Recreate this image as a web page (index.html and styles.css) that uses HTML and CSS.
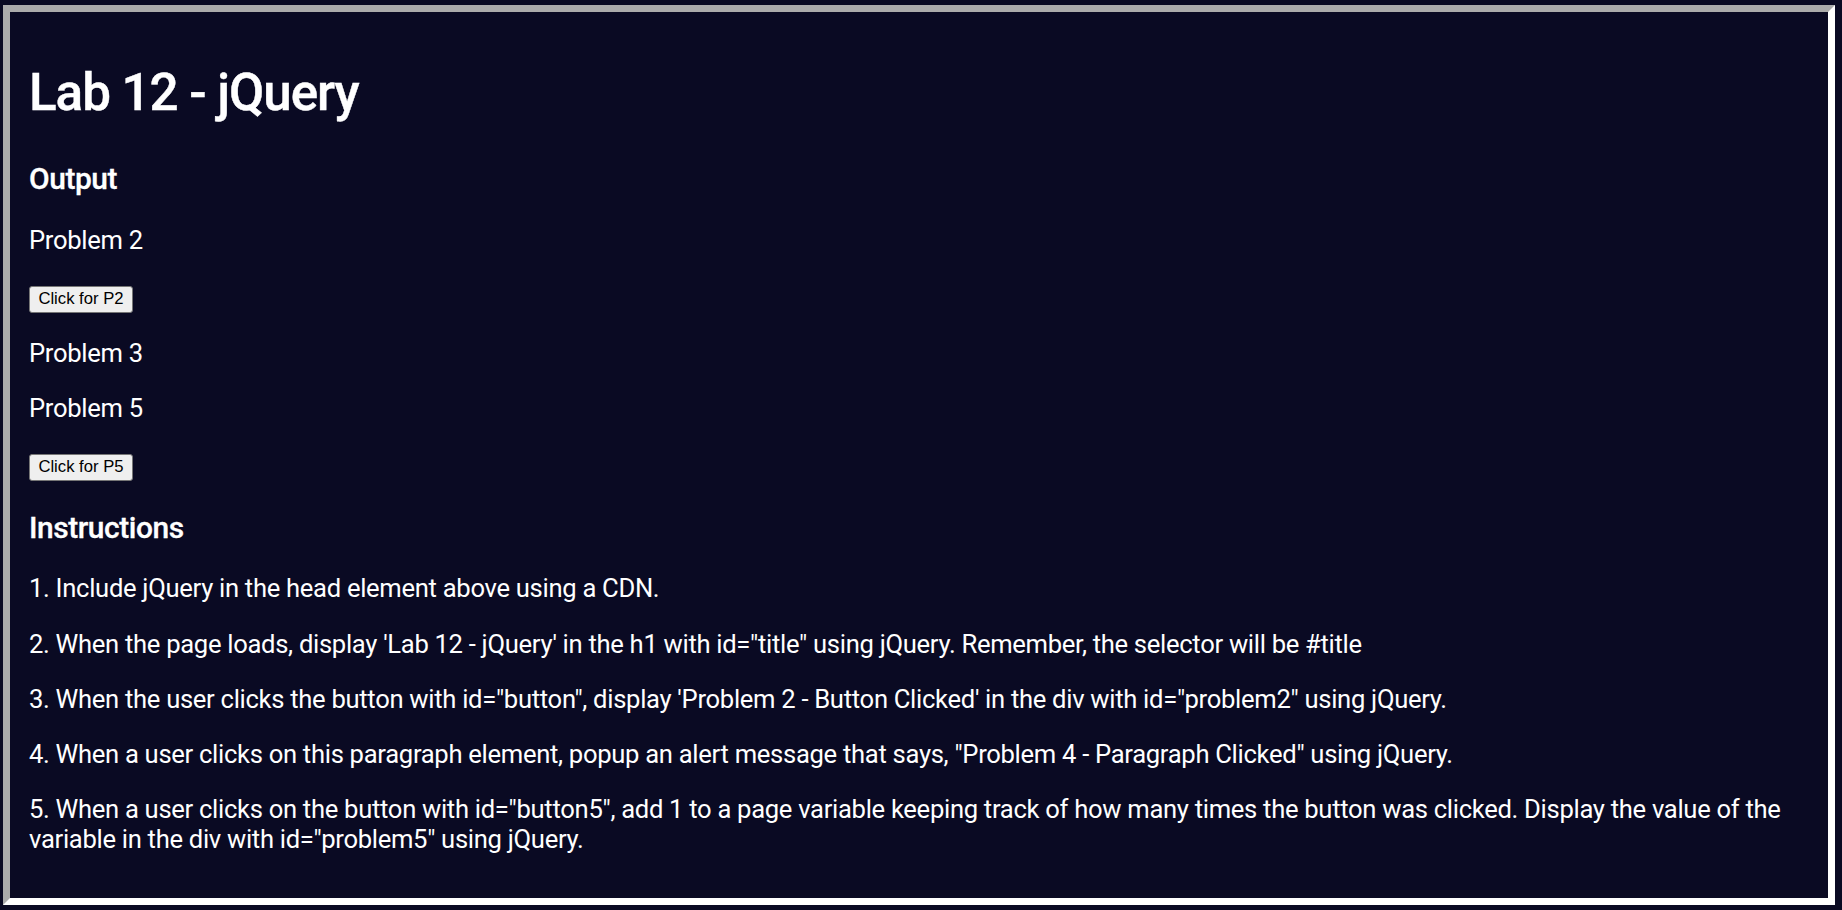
FILE: index.html
```html
<!DOCTYPE html>
<html>
<head>
<meta charset="utf-8">
<title>Lab 12 - jQuery</title>
<link rel="stylesheet" href="styles.css">
</head>
<body>
<div class="frame">
  <main class="panel">
    <h1 class="title">Lab 12 - jQuery</h1>
    <h3 class="section">Output</h3>
    <p class="line">Problem 2</p>
    <p class="line"><button class="btn">Click for P2</button></p>
    <p class="line">Problem 3</p>
    <p class="line">Problem 5</p>
    <p class="line"><button class="btn">Click for P5</button></p>
    <h3 class="section">Instructions</h3>
    <p class="line">1. Include jQuery in the head element above using a CDN.</p>
    <p class="line">2. When the page loads, display 'Lab 12 - jQuery' in the h1 with id="title" using jQuery. Remember, the selector will be #title</p>
    <p class="line">3. When the user clicks the button with id="button", display 'Problem 2 - Button Clicked' in the div with id="problem2" using jQuery.</p>
    <p class="line">4. When a user clicks on this paragraph element, popup an alert message that says, "Problem 4 - Paragraph Clicked" using jQuery.</p>
    <p class="line">5. When a user clicks on the button with id="button5", add 1 to a page variable keeping track of how many times the button was clicked. Display the value of the variable in the div with id="problem5" using jQuery.</p>
  </main>
</div>
</body>
</html>
```
FILE: styles.css
```css
html, body {
  margin: 0;
  padding: 0;
  background: #0a0a23;
}
body {
  font-family: Roboto, "Noto Sans", sans-serif;
  font-size: 25.6px;
  color: #ffffff;
}
.frame {
  padding: 5px 7px 0 3px;
}
.panel {
  border: 7px inset #ffffff;
  padding: 20px 19px 19px 19px;
}
.title {
  font-size: 51.2px;
  font-weight: 500;
  letter-spacing: -1.05px;
  -webkit-text-stroke: 0.4px #ffffff;
  margin: 30.3px 0 38px 0;
}
.section {
  font-size: 29.95px;
  font-weight: 500;
  letter-spacing: -0.45px;
  -webkit-text-stroke: 0.3px #ffffff;
  margin: 28.8px 0;
}
.line {
  margin: 25.2px 0;
  letter-spacing: -0.3px;
}
.btn {
  font-family: "Liberation Sans", Arial, sans-serif;
  font-size: 16.67px;
  letter-spacing: 0;
  color: #000000;
  background: #efefef;
  border: 1px solid #767676;
  border-radius: 3px;
  padding: 2.5px 8.4px;
  margin: 0;
}
```
